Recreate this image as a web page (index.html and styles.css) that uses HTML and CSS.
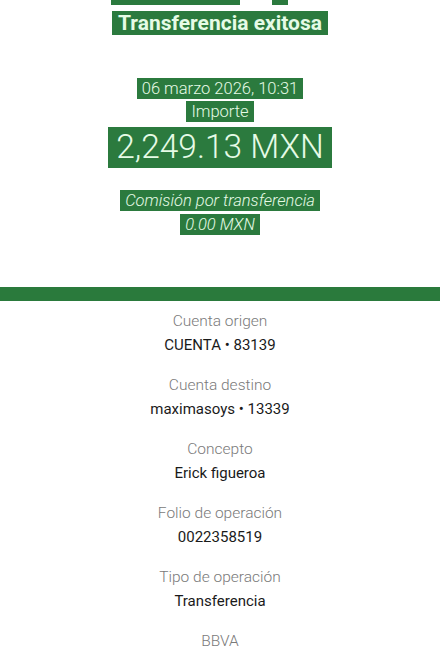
FILE: index.html
```html
<!DOCTYPE html>
<html lang="es">
<head>
<meta charset="utf-8">
<link rel="stylesheet" href="styles.css">
</head>
<body>
<div class="page">
  <header class="hero">
    <div class="scraps"><span class="scrap s1"></span><span class="scrap s2"></span></div>
    <h1 class="title"><span class="hl">Transferencia exitosa</span></h1>
    <p class="date"><span class="hl">06 marzo 2026, 10:31</span></p>
    <p class="label-in"><span class="hl">Importe</span></p>
    <p class="amount"><span class="hl">2,249.13 MXN</span></p>
    <p class="fee"><span class="hl">Comisión por transferencia</span></p>
    <p class="fee fee-val"><span class="hl">0.00 MXN</span></p>
  </header>
  <div class="bar"></div>
  <section class="details">
    <div class="item"><div class="k">Cuenta origen</div><div class="v">CUENTA • 83139</div></div>
    <div class="item"><div class="k">Cuenta destino</div><div class="v">maximasoys • 13339</div></div>
    <div class="item"><div class="k">Concepto</div><div class="v">Erick figueroa</div></div>
    <div class="item"><div class="k">Folio de operación</div><div class="v">0022358519</div></div>
    <div class="item"><div class="k">Tipo de operación</div><div class="v">Transferencia</div></div>
    <div class="item"><div class="k">BBVA</div></div>
  </section>
</div>
</body>
</html>
```

FILE: styles.css
```css
* { box-sizing: border-box; }
html, body { margin: 0; padding: 0; background: #fff; }
body { font-family: Roboto, "Liberation Sans", sans-serif; color: #222; }
.page { width: 440px; height: 661px; overflow: hidden; }
.hero { display: flex; flex-direction: column; align-items: center; height: 287px; }
.hero p, .hero h1 { margin: 0; text-align: center; }
.hl { background: #2b7a3e; color: #e6fbe6; padding: 1px 5px; }
.scraps { display: flex; height: 5px; width: 100%; }
.scrap { background: #2b7a3e; height: 5px; }
.s1 { margin-left: 111px; width: 129px; }
.s2 { margin-left: 32px; width: 16px; }
.title { font-size: 21px; font-weight: 700; line-height: 26px; margin-top: 5px !important; }
.title .hl { padding: 0 6px; }
.date { font-size: 16.5px; font-weight: 300; line-height: 19px; margin-top: 43px !important; }
.label-in { font-size: 16.5px; font-weight: 300; line-height: 19px; margin-top: 4px !important; }
.amount { font-size: 33.5px; font-weight: 300; line-height: 40px; margin-top: 6px !important; }
.amount .hl { padding: 0 8px 2px; }
.fee { font-size: 16.5px; font-weight: 300; font-style: italic; line-height: 20px; margin-top: 24px !important; }
.fee-val { margin-top: 4px !important; }
.bar { height: 14px; background: #2a7a3c; }
.details { display: flex; flex-direction: column; align-items: center; padding-top: 9px; }
.item { display: flex; flex-direction: column; align-items: center; height: 64px; }
.k { font-size: 15.5px; font-weight: 300; color: #7a7a7a; line-height: 22px; }
.v { font-size: 15px; font-weight: 400; color: #1a1a1a; line-height: 22px; margin-top: 2px; }
```
